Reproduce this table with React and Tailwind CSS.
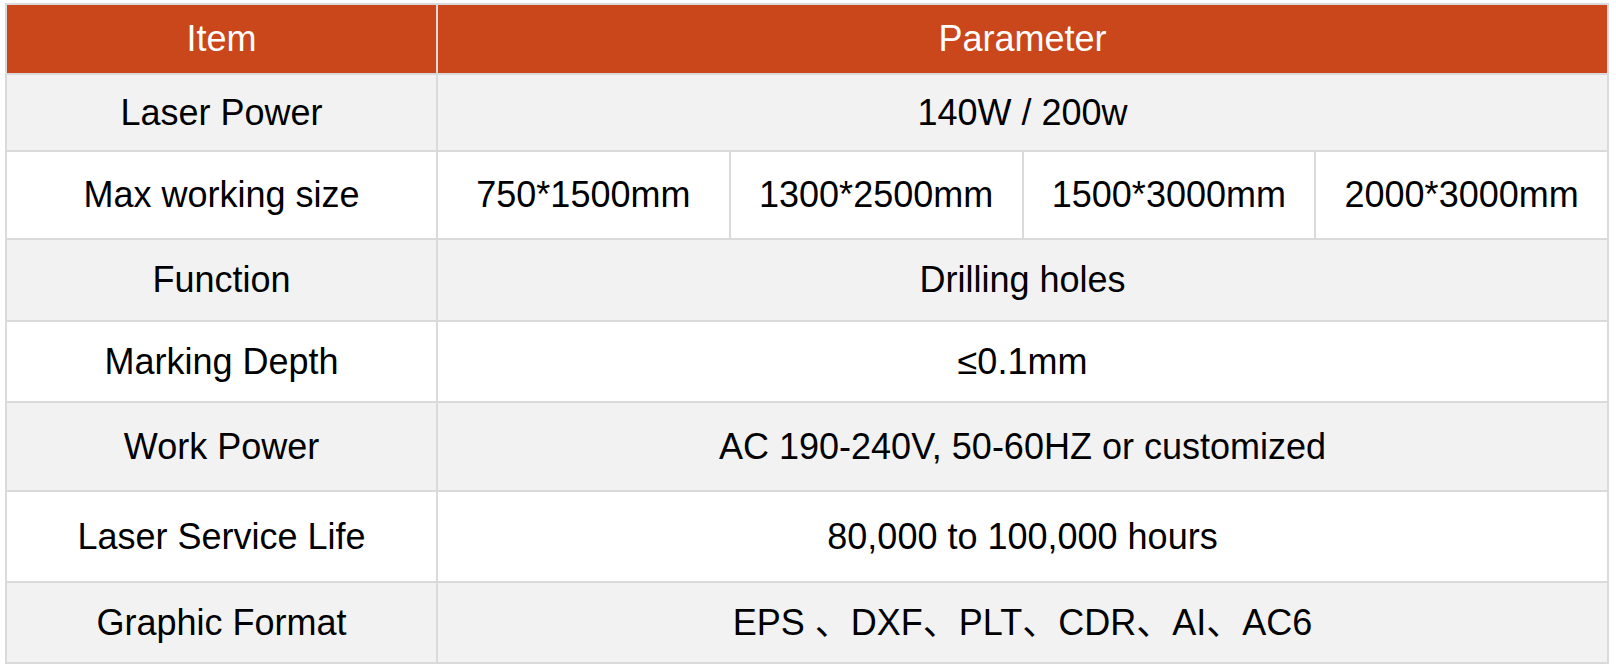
import React from 'react';

const rows = [
  { item: 'Laser Power', value: '140W / 200w', h: 'h-[75px]', bg: 'bg-[#f2f2f2]' },
  { item: 'Max working size', sizes: ['750*1500mm', '1300*2500mm', '1500*3000mm', '2000*3000mm'], h: 'h-[86px]', bg: 'bg-white' },
  { item: 'Function', value: 'Drilling holes', h: 'h-[80px]', bg: 'bg-[#f2f2f2]' },
  { item: 'Marking Depth', value: '≤0.1mm', h: 'h-[79px]', bg: 'bg-white' },
  { item: 'Work Power', value: 'AC 190-240V, 50-60HZ or customized', h: 'h-[87px]', bg: 'bg-[#f2f2f2]' },
  { item: 'Laser Service Life', value: '80,000 to 100,000 hours', h: 'h-[89px]', bg: 'bg-white' },
  { item: 'Graphic Format', value: 'EPS 、DXF、PLT、CDR、AI、AC6', h: 'h-[79px]', bg: 'bg-[#f2f2f2]' },
];

const Cell = ({ className = '', children }) => (
  <div className={`flex items-center justify-center whitespace-nowrap ${className}`}>{children}</div>
);

export default function App() {
  return (
    <div className="min-h-screen bg-white pt-[3px] pl-[5px] font-['Liberation_Sans',Arial,'Noto_Sans_CJK_SC',sans-serif] text-[36px] leading-none text-black">
      <div className="grid w-[1604px] grid-cols-[429px_1169px] gap-[2px] bg-[#dadada] p-[2px]">
        {/* Header */}
        <Cell className="h-[68px] bg-[#ca461b] text-white">Item</Cell>
        <Cell className="h-[68px] bg-[#ca461b] text-white">Parameter</Cell>

        {rows.map((row) => (
          <React.Fragment key={row.item}>
            <Cell className={`${row.h} ${row.bg}`}>{row.item}</Cell>
            {row.sizes ? (
              <div className={`grid grid-cols-4 gap-[2px] ${row.h}`}>
                {row.sizes.map((s) => (
                  <Cell key={s} className={row.bg}>{s}</Cell>
                ))}
              </div>
            ) : (
              <Cell className={`${row.h} ${row.bg}`}>{row.value}</Cell>
            )}
          </React.Fragment>
        ))}
      </div>
    </div>
  );
}
